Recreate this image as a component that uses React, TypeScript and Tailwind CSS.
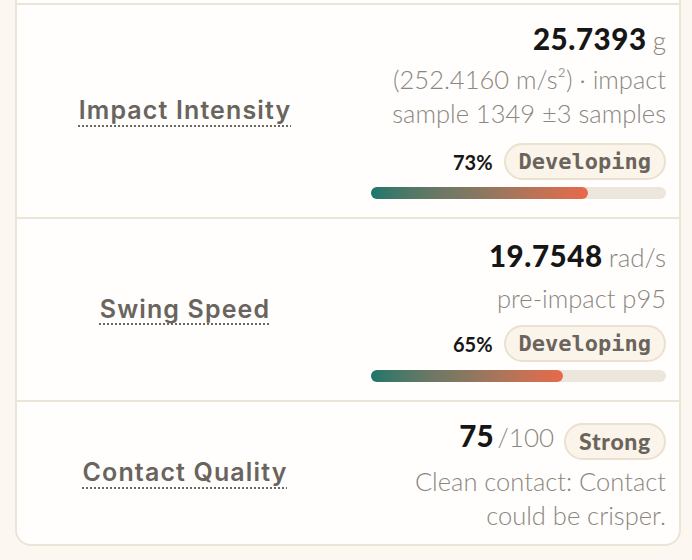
const sans = "font-['Lato','Noto_Sans',sans-serif]";
const labelFont = "font-['Inter','Liberation_Sans',sans-serif]";
const mono = "font-['DejaVu_Sans_Mono','Liberation_Mono',monospace]";

function Badge({ children, heavy = false }: { children: string; heavy?: boolean }) {
    return (
        <span
            className={`inline-flex h-[37px] items-center rounded-full border-2 border-[#ebe1cf] bg-[#faf4ea] px-[13px] text-[#6b645c] ${
                heavy ? `${sans} text-[23px] font-black tracking-[0.03em]` : `${mono} text-[22px] font-bold`
            }`}
        >
            {children}
        </span>
    );
}

function Bar({ pct }: { pct: number }) {
    return (
        <div className="h-[12px] w-full rounded-full bg-[#ece6dc]">
            <div
                className="h-full rounded-full bg-gradient-to-r from-[#17776b] via-[#8a7760] to-[#e8694a]"
                style={{ width: `${pct}%` }}
            />
        </div>
    );
}

function Label({ children }: { children: string }) {
    return (
        <div className="flex w-[336px] shrink-0 items-center justify-center">
            <span
                className={`${labelFont} text-[25px] font-semibold tracking-[0.045em] text-[#69645d] underline decoration-dotted decoration-[#6e6960] decoration-2 underline-offset-[6px]`}
            >
                {children}
            </span>
        </div>
    );
}

export default function App() {
    return (
        <div className="h-[560px] w-[692px] bg-[#fcf8f1]">
            <div className="ml-[15px] w-[666px] overflow-hidden rounded-b-[16px] border-x-2 border-b-2 border-[#ebe5d8] bg-[#fffefc] pt-[3px]">
                {/* Impact Intensity */}
                <div className="flex h-[214px] border-t-2 border-[#ebe5d8]">
                    <Label>Impact Intensity</Label>
                    <div className={`flex flex-1 flex-col items-end pr-[13px] pt-[16px] ${sans}`}>
                        <div className="flex items-baseline gap-[6px] leading-[36px]">
                            <span className="text-[29.5px] font-black tracking-[0.02em] text-[#161616]">25.7393</span>
                            <span className="text-[26px] font-light text-[#8b8680]">g</span>
                        </div>
                        <div className="mt-[4px] text-right text-[25.5px] font-light leading-[34px] text-[#8b8680]">
                            (252.4160 m/s²) · impact
                            <br />
                            sample 1349 ±3 samples
                        </div>
                        <div className="mt-[13px] flex items-center gap-[11px]">
                            <span className="text-[20px] font-bold text-[#161616]">73%</span>
                            <Badge>Developing</Badge>
                        </div>
                        <div className="mt-[7px] w-[295px]">
                            <Bar pct={73.5} />
                        </div>
                    </div>
                </div>

                {/* Swing Speed */}
                <div className="flex h-[183px] border-t-2 border-[#ebe5d8]">
                    <Label>Swing Speed</Label>
                    <div className={`flex flex-1 flex-col items-end pr-[13px] pt-[19px] ${sans}`}>
                        <div className="flex items-baseline gap-[6px] leading-[36px]">
                            <span className="text-[29.5px] font-black tracking-[0.02em] text-[#161616]">19.7548</span>
                            <span className="text-[26px] font-light text-[#8b8680]">rad/s</span>
                        </div>
                        <div className="mt-[6px] text-right text-[25.5px] font-light leading-[34px] text-[#8b8680]">pre-impact p95</div>
                        <div className="mt-[10px] flex items-center gap-[11px]">
                            <span className="text-[20px] font-bold text-[#161616]">65%</span>
                            <Badge>Developing</Badge>
                        </div>
                        <div className="mt-[8px] w-[295px]">
                            <Bar pct={65} />
                        </div>
                    </div>
                </div>

                {/* Contact Quality */}
                <div className="flex h-[144px] border-t-2 border-[#ebe5d8]">
                    <Label>Contact Quality</Label>
                    <div className={`flex flex-1 flex-col items-end pr-[13px] pt-[20px] ${sans}`}>
                        <div className="flex items-center gap-[10px]">
                            <div className="mb-[10px] flex items-baseline gap-[4px] leading-[27px]">
                                <span className="text-[29.5px] font-black text-[#161616]">75</span>
                                <span className="text-[26px] font-light text-[#8b8680]">/100</span>
                            </div>
                            <Badge heavy>Strong</Badge>
                        </div>
                        <div className="mt-[3px] text-right text-[25.5px] font-light leading-[34px] text-[#8b8680]">
                            Clean contact: Contact
                            <br />
                            could be crisper.
                        </div>
                    </div>
                </div>
            </div>
        </div>
    );
}
